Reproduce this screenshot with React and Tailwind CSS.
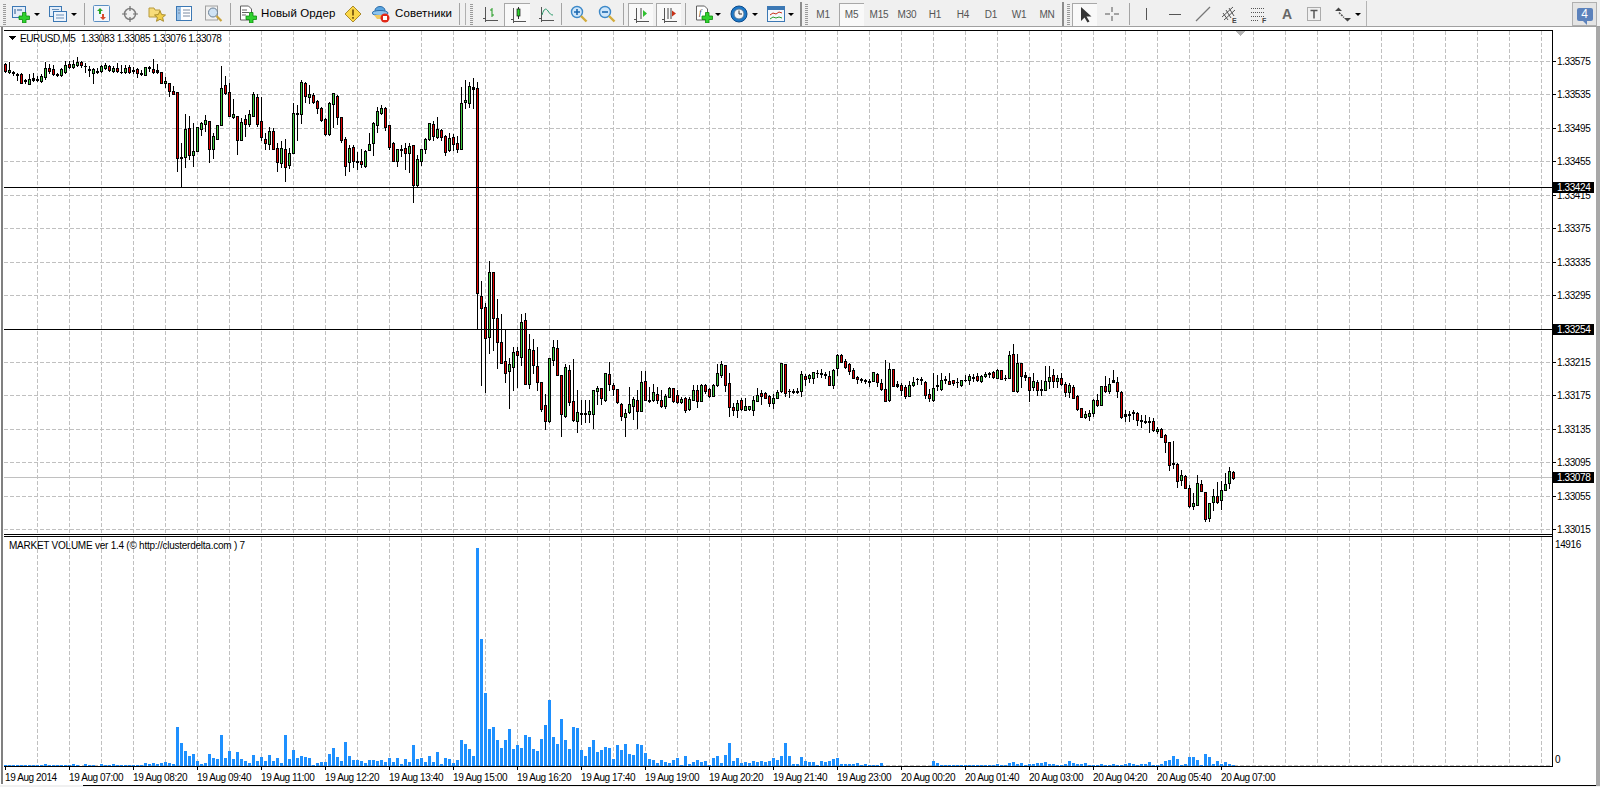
import React from "react";

const segA = "40,43,63,65,r 36,60,65,68,g 62,66,70,76,t 68,72,76,90,r 70,72,98,100,r 86,90,94,100,t 72,87,101,101,g 70,85,89,92,t 78,87,91,94,t 72,78,94,96,g 37,55,80,86,g 42,55,62,70,r 45,58,71,74,r 68,72,76,78,t 55,58,76,78,g 32,46,65,68,g 34,42,52,55,r 30,42,50,55,g 21,37,44,48,g 33,36,46,50,r 38,48,49,65,t 47,56,59,78,t 54,58,68,98,g 54,63,65,68,t 44,49,62,66,g 40,45,53,58,g 45,49,59,64,r 49,55,62,66,g 38,55,62,67,r 45,65,67,68,t 44,54,67,69,g 45,51,67,70,r 50,61,64,68,t 55,58,68,80,r 60,70,73,75,t 50,52,74,76,g 48,52,53,62,t 27,58,66,70,r 43,61,66,68,t 67,67,100,100,r 82,93,100,112,g 98,100,122,137,r 108,124,131,133,r 127,127,325,362,r 280,322,325,407,t 193,238,322,350,g 198,235,314,328,r 220,304,314,347,g 232,232,302,302,g 216,218,236,254,g 194,210,222,242,g 212,212,296,335,r 250,258,298,323,g 224,224,268,268,g 48,115,224,224,g 77,106,128,132,r 100,127,197,197,r 148,193,200,205,g 197,199,269,311,r 205,217,269,269,g 195,208,221,257,r 180,193,221,228,g 127,133,197,197,g 132,142,221,227,r 142,214,260,270,r 250,268,278,297,r 230,244,281,298,g 235,244,298,298,r 280,295,335,362,r 272,295,338,350,g 268,298,350,392,r 295,310,346,354,g 158,190,308,310,g 165,190,191,270,t 90,97,193,218,g 95,100,137,155,r 105,133,140,160,g 128,135,155,158,r 150,154,173,190,r 170,174,210,212,r 205,208,252,255,r 155,160,252,255,g 128,130,161,230,g 135,138,200,222,r 200,202,270,275,r 262,268,347,375,r 285,295,335,362,g 285,290,332,350,r 305,334,335,357,t 297,333,341,352,r 300,304,348,352,g 250,283,299,300,g 215,220,278,315,g 170,184,224,246,g 165,175,189,192,g 172,174,230,240,r 226,226,290,297,r 276,280,332,333,r 296,298,332,348,g 285,296,300,318,t 280,293,308,357,r 280,289,308,366,g 284,286,404,455,r 315,328,405,411,g 296,298,332,345,g 265,268,298,310,g 218,220,268,270,g 212,222,258,270,r 202,238,260,265,g 238,240,260,270,r 255,257,305,315,r 250,265,300,303,g 252,262,282,300,r 258,280,298,305,r 110,160,298,298,g 90,151,157,175,g 95,109,160,170,g 85,112,116,175,t 95,115,729,837,r";
const segB = "124,168,205,434,r 188,202,295,455,r 64,97,292,340,g 97,97,235,330,r 178,235,305,383,r 222,307,368,368,r 270,364,398,425,r 355,372,392,503,g 322,335,380,450,g 322,334,344,440,r 222,247,350,375,g 220,241,433,433,r 283,328,431,445,g 297,331,374,400,r 320,379,425,450,r 427,427,507,512,r 462,496,544,566,r 355,355,544,545,g 300,322,361,375,g 300,325,404,406,r 406,406,523,587,r 372,381,527,530,g 375,390,487,495,r 357,484,540,542,r 450,517,542,575,g 480,520,521,552,t 480,519,523,545,t 480,514,523,545,g 451,451,521,565,g 438,444,452,492,g 445,445,474,492,r 400,400,480,483,g 366,403,431,450,r 428,435,446,465,r 448,448,486,490,r 490,492,527,540,r 508,520,530,587,g 441,492,515,520,g 470,478,497,537,g 450,481,512,565,r 393,427,512,512,g 394,424,480,480,r 440,481,482,485,t 432,457,480,482,g 440,463,480,490,r 450,481,497,500,r 462,469,497,503,g 440,444,470,472,g 445,445,482,487,r 450,466,486,490,r 472,478,485,490,g 470,475,510,515,r 470,478,508,510,g 435,451,480,480,g 435,451,483,500,r 432,436,482,482,g 432,436,452,458,r 445,446,468,470,r 432,435,468,468,g 372,400,435,438,g 364,372,404,410,g 376,376,434,452,r 400,430,500,527,r 490,502,510,525,r 480,490,510,530,g 475,481,507,510,r 475,499,510,510,g 499,499,507,510,g 468,481,509,525,g 445,466,483,483,g 450,458,467,492,r 456,460,473,475,r 464,467,488,498,r 462,475,490,505,g 450,457,473,475,g 370,370,453,455,g 373,373,460,468,r 448,453,454,472,t 447,452,455,460,t 445,452,455,458,t 393,403,452,468,g 402,408,416,435,r 402,405,413,425,g 395,397,413,428,g 390,398,400,410,t 388,400,403,410,t 395,403,405,415,t 393,409,434,434,r 387,391,434,443,g 342,345,385,405,g";
const segC = "72,75,95,97,r 87,93,110,115,r 98,103,122,133,r 115,120,143,145,r 138,141,148,158,r 143,148,150,155,t 147,150,153,160,t 147,153,156,167,t 127,127,152,152,g 130,132,155,168,r 148,160,178,180,r 90,178,212,212,r 98,118,210,212,g 118,118,167,168,r 152,163,167,170,t 160,164,179,195,r 165,171,198,203,r 152,165,197,197,g 142,157,166,168,g 144,146,148,162,t 140,148,151,162,t 153,156,194,204,r 178,193,203,214,r 130,175,209,212,g 135,166,167,180,t 128,151,176,180,g 138,147,149,158,t 130,154,161,163,r 150,151,158,165,r 145,156,157,170,t 150,151,166,168,g 135,149,151,153,t 133,139,151,162,g 132,142,143,152,t 130,139,151,153,r 135,139,152,155,g 127,131,137,142,g 125,130,133,142,g 122,127,142,144,r 117,119,143,144,g 120,121,146,146,r 135,143,145,150,t 63,75,143,143,g 43,73,182,182,r 73,99,184,185,g 98,100,137,170,r 125,135,140,150,t 140,142,181,212,r 130,153,170,180,g 150,157,181,195,r 150,178,181,195,t 108,152,179,180,g 108,142,152,175,g 118,136,152,170,r 135,145,152,170,g 130,145,163,165,r 155,162,185,197,r 160,165,187,200,g 165,172,203,205,r 195,198,237,240,r 235,235,260,262,r 243,253,260,263,g 240,250,257,270,g 208,210,250,258,g 192,211,225,228,r 168,168,224,226,g 138,168,183,186,r 143,162,183,188,g 121,151,155,155,t 142,157,182,200,r 184,186,261,265,r 240,253,257,272,t 243,253,256,272,t 240,247,250,268,t 247,250,269,285,r 255,271,274,290,t 255,273,277,280,t 260,274,277,305,t 265,273,300,303,r 290,296,303,310,g 295,297,320,322,r 313,315,335,367,r 336,336,405,420,r 333,400,402,415,t 400,402,452,472,r 420,436,450,465,g 435,438,473,475,r 465,474,527,530,r 490,520,527,537,g 435,460,525,525,g 450,463,482,484,r 487,487,566,572,r 518,520,564,572,g 478,499,515,540,g 457,499,515,520,r 452,481,509,537,g 428,463,479,480,g 412,424,458,473,g 422,426,443,447,r";

const parseSeg = (s, off) =>
  s.split(" ").map((c) => {
    const p = c.split(",");
    return { hi: off + Math.round(+p[0] / 3), top: off + Math.round(+p[1] / 3), bot: off + Math.round(+p[2] / 3), lo: off + Math.round(+p[3] / 3), c: p[4] };
  });

const candles = [...parseSeg(segA, 50), ...parseSeg(segB, 240), ...parseSeg(segC, 330)];

const vol = [
  1,1,1,1,1,1,1,1,1,1,2,1,1,1,1,1,1,2,1,0,2,1,1,0,2,1,1,2,1,1,1,1,1,1,1,3,2,3,2,3,4,3,2,
  39,23,15,10,12,5,2,3,12,8,7,31,8,15,7,14,7,5,3,11,5,9,5,11,5,8,3,31,7,16,8,10,9,8,1,3,4,4,12,18,9,5,24,10,6,6,5,3,6,6,5,6,4,8,4,8,2,7,4,21,7,8,4,10,4,14,2,8,7,3,6,26,22,17,10,
  218,127,73,37,39,26,18,26,37,17,21,18,31,29,17,15,27,41,66,
  29,22,47,26,17,39,38,16,10,19,26,14,16,19,18,7,21,16,22,12,11,22,21,13,7,6,3,6,4,3,6,8,1,10,2,4,6,4,5,1,8,10,3,11,23,5,8,3,4,3,5,4,5,4,5,8,6,10,23,10,2,2,9,5,4,4,1,5,4,5,7,8,2,2,2,2,3,1,2,1,1,1,3,
  0,0,0,0,0,0,0,0,0,0,0,0,5,3,1,1,1,1,1,1,1,1,1,1,1,1,1,1,2,1,1,3,4,2,3,1,2,2,3,
  3,4,2,2,1,1,2,5,3,2,2,3,1,1,1,2,1,1,2,1,1,2,
  3,2,1,2,2,4,1,1,2,5,6,10,7,1,2,9,9,6,1,12,9,2,5,2,4,2,1,
];

const gridX = Array.from({ length: 48 }, (_, i) => 37 + i * 32);
const prices = [
  ["1.33575", 61], ["1.33535", 94], ["1.33495", 128], ["1.33455", 161], ["1.33415", 195],
  ["1.33375", 228], ["1.33335", 262], ["1.33295", 295], ["1.33255", 329], ["1.33215", 362],
  ["1.33175", 395], ["1.33135", 429], ["1.33095", 462], ["1.33055", 496], ["1.33015", 529],
];
const times = [
  "19 Aug 2014", "19 Aug 07:00", "19 Aug 08:20", "19 Aug 09:40", "19 Aug 11:00", "19 Aug 12:20", "19 Aug 13:40",
  "19 Aug 15:00", "19 Aug 16:20", "19 Aug 17:40", "19 Aug 19:00", "19 Aug 20:20", "19 Aug 21:40", "19 Aug 23:00",
  "20 Aug 00:20", "20 Aug 01:40", "20 Aug 03:00", "20 Aug 04:20", "20 Aug 05:40", "20 Aug 07:00",
];

const axisText = "font-['Liberation_Sans',sans-serif] text-[10px] tracking-[-0.4px]";

function PriceLabel({ y, text }) {
  return (
    <g>
      <rect x="1553" y={y - 5} width="41" height="11" fill="#000" />
      <text x="1557" y={y + 4} fill="#fff" className={axisText}>{text}</text>
    </g>
  );
}

function MainChart() {
  return (
    <svg width="1596" height="506" viewBox="0 30 1596 506" className="block" shapeRendering="crispEdges">
      {gridX.map((x) => (
        <line key={x} x1={x + 0.5} x2={x + 0.5} y1="31" y2="534" stroke="#c0c0c0" strokeDasharray="4 2" />
      ))}
      {prices.map(([t, y]) => (
        <line key={t} x1="4" x2="1552" y1={y + 0.5} y2={y + 0.5} stroke="#c0c0c0" strokeDasharray="4 2" />
      ))}
      <rect x="4" y="477" width="1548" height="1" fill="#c0c0c0" />
      {candles.map((k, i) => {
        const x = 5 + i * 4;
        return (
          <g key={i}>
            <rect x={x} y={k.hi} width="1" height={k.lo - k.hi + 1} fill="#000" />
            <rect x={x - 1} y={k.top} width="3" height={k.bot - k.top + 1} fill="#000" />
            {k.c !== "t" && k.bot - k.top > 1 && (
              <rect x={x} y={k.top + 1} width="1" height={k.bot - k.top - 1} fill={k.c === "r" ? "#e00000" : "#3ecb3e"} />
            )}
          </g>
        );
      })}
      <rect x="4" y="187" width="1548" height="1" fill="#000" />
      <rect x="4" y="329" width="1548" height="1" fill="#000" />
      <rect x="4" y="30" width="1549" height="1" fill="#000" />
      <rect x="4" y="534" width="1549" height="1" fill="#000" />
      <rect x="1552" y="30" width="1" height="506" fill="#000" />
      {prices.map(([t, y]) => (
        <g key={t}>
          <rect x="1553" y={y} width="3" height="1" fill="#000" />
          <text x="1557" y={y + 4} fill="#000" shapeRendering="auto" className={axisText}>{t}</text>
        </g>
      ))}
      <PriceLabel y={187} text="1.33424" />
      <PriceLabel y={329} text="1.33254" />
      <PriceLabel y={477} text="1.33078" />
      <path d="M1236 31h9l-4.5 5z" fill="#b4b4b4" />
      <path d="M8 36h8l-4 4z" fill="#000" />
      <text x="20" y="42" fill="#000" className={axisText}>EURUSD,M5</text>
      <text x="81" y="42" fill="#000" className={axisText}>1.33083 1.33085 1.33076 1.33078</text>
    </svg>
  );
}

function VolumeChart() {
  return (
    <svg width="1596" height="231" viewBox="0 536 1596 231" className="block" shapeRendering="crispEdges">
      {gridX.map((x) => (
        <line key={x} x1={x + 0.5} x2={x + 0.5} y1="537" y2="766" stroke="#c0c0c0" strokeDasharray="4 2" />
      ))}
      <line x1="4" x2="1552" y1="765.5" y2="765.5" stroke="#c0c0c0" strokeDasharray="4 2" />
      {vol.map((h, i) =>
        h > 0 ? <rect key={i} x={4 + i * 4} y={766 - h} width="3" height={h} fill="#1e90ff" /> : null
      )}
      <rect x="4" y="536" width="1549" height="1" fill="#000" />
      <rect x="4" y="766" width="1549" height="1" fill="#000" />
      <rect x="1552" y="536" width="1" height="231" fill="#000" />
      <text x="9" y="549" fill="#000" className="font-['Liberation_Sans',sans-serif] text-[10px] tracking-[-0.24px]">MARKET VOLUME ver 1.4 (© http://clusterdelta.com ) 7</text>
      <text x="1555" y="548" fill="#000" className={axisText}>14916</text>
      <text x="1555" y="763" fill="#000" className={axisText}>0</text>
    </svg>
  );
}

function Grip() {
  return <div className="w-[3px] h-[21px] bg-[repeating-linear-gradient(to_bottom,#9a9a9a_0,#9a9a9a_1px,transparent_1px,transparent_2px)]" />;
}
function Sep({ className }) {
  return <div className={`w-px h-[22px] bg-[#a4a4a4] ${className}`} />;
}
function Arrow({ className }) {
  return <div className={`w-0 h-0 border-x-[3px] border-x-transparent border-t-[3px] border-t-black ${className}`} />;
}
function Ico({ className = "", children }) {
  return (
    <svg width="18" height="18" viewBox="0 0 18 18" className={`shrink-0 ${className}`}>
      {children}
    </svg>
  );
}
function Box({ className, children }) {
  return (
    <div className={`h-[23px] flex items-center justify-center border-t border-l border-[#a8a8a8] bg-[#f9f9f9] ${className}`}>
      {children}
    </div>
  );
}

const Plus = () => <path d="M10.500 7.500h3.500v3.500h3.500v3.500H14V18h-3.500v-3.500H7V11h3.500z" fill="#2fd12f" stroke="#0c8a0c" strokeWidth="0.8" />;
const Axes = () => <path d="M4.5 2v13.5H17M2 13.5h2.5M4.5 17v-2" fill="none" stroke="#555" />;

function Toolbar() {
  return (
    <div className="flex items-center h-[26px] pl-[3px] pt-[2px] bg-[#f0f0f0] text-[#000] font-['Liberation_Sans',sans-serif]">
      <Grip />
      <Ico className="ml-[6px]">
        <rect x="0.5" y="1.5" width="13" height="11" fill="#e4eefa" stroke="#3c78b4" />
        <path d="M3 4v5M5 5h3M9 4v2" stroke="#2a5a90" fill="none" />
        <Plus />
      </Ico>
      <Arrow className="ml-[4px]" />
      <Ico className="ml-[9px]">
        <rect x="0.5" y="1.5" width="12" height="10" fill="#e4eefa" stroke="#3c78b4" />
        <rect x="4.5" y="6.5" width="13" height="10" fill="#eef4fc" stroke="#3c78b4" />
        <path d="M3 4.5h7M7 10h8M7 13h8" stroke="#6a8fb8" />
      </Ico>
      <Arrow className="ml-[4px]" />
      <Sep className="ml-[7px]" />
      <Ico className="ml-[8px]">
        <rect x="0.5" y="0.5" width="16" height="16" rx="1" fill="#f2f6fb" stroke="#5b8fc4" />
        <path d="M6 9V6H4l3-3 3 3H8v3z" fill="#25a525" />
        <path d="M9 9v3H7l3 3 3-3h-2V9z" fill="#d84a2a" />
      </Ico>
      <Ico className="ml-[10px]">
        <circle cx="9" cy="9" r="5.5" fill="none" stroke="#808080" strokeWidth="1.5" />
        <path d="M9 1v5M9 12v5M1 9h5M12 9h5" stroke="#707070" strokeWidth="1.2" />
      </Ico>
      <Ico className="ml-[9px]">
        <path d="M1 3h5l1 2h5v7H1z" fill="#f7dc7a" stroke="#b89a3c" />
        <path d="M12 6l1.7 3.6 3.8.4-2.9 2.5.9 3.8-3.5-2-3.5 2 .9-3.8L6.5 10l3.8-.4z" fill="#f2cf4a" stroke="#a98c2c" />
      </Ico>
      <Ico className="ml-[10px]">
        <rect x="0.5" y="1.5" width="15" height="14" fill="#fff" stroke="#3c78b4" />
        <rect x="1" y="2" width="4" height="13" fill="#9cc3e8" />
        <path d="M7 5h7M7 8h7M7 11h7M2 5h2M2 8h2" stroke="#7a8aa0" />
      </Ico>
      <Ico className="ml-[11px]">
        <rect x="0.5" y="1" width="12" height="14" fill="#f0f0f0" stroke="#a0a0a0" />
        <circle cx="8" cy="7.5" r="4.5" fill="#cfe2f4" stroke="#6a7f94" />
        <path d="M11.5 11l5 5" stroke="#c8a23a" strokeWidth="2.2" />
      </Ico>
      <Sep className="ml-[7px]" />
      <Ico className="ml-[8px]">
        <path d="M1.5 1h8l3 3v11h-11z" fill="#fff" stroke="#606060" />
        <path d="M3 5h5M3 7.500h7M3 10h4" stroke="#606060" />
        <Plus />
      </Ico>
      <span className="ml-[4px] w-[73px] text-[11.5px] tracking-[0.1px] whitespace-nowrap">Новый Ордер</span>
      <Ico className="ml-[10px]">
        <path d="M9 1l8 8-8 8-8-8z" fill="#fbd748" stroke="#a98a2a" />
        <path d="M9 4.500v6M9 12v1.800" stroke="#7a5a10" strokeWidth="1.8" />
      </Ico>
      <Ico className="ml-[10px]">
        <ellipse cx="8" cy="5.500" rx="5" ry="4" fill="#5aa5e0" stroke="#2c6ca8" />
        <ellipse cx="8" cy="8" rx="8" ry="2.500" fill="#8cc4ee" stroke="#2c6ca8" />
        <path d="M2 10h8v4H5z" fill="#f0c860" />
        <circle cx="13" cy="13" r="4.500" fill="#e02818" />
        <rect x="11" y="11" width="4" height="4" fill="#fff" />
      </Ico>
      <span className="ml-[5px] w-[58px] text-[11.5px] tracking-[0.1px] whitespace-nowrap">Советники</span>
      <Sep className="ml-[6px]" />
      <div className="ml-[5px] w-px h-[22px] bg-[#b0b0b0]" />
      <div className="ml-[4px]"><Grip /></div>
      <Ico className="ml-[8px]">
        <Axes />
        <path d="M11 3v9M9 5h2M11 10h2" stroke="#1f9a1f" fill="none" />
      </Ico>
      <Box className="ml-[5px] w-[26px]">
        <Ico>
          <Axes />
          <path d="M9.500 1v12" stroke="#333" />
          <rect x="8" y="3" width="3" height="7" fill="#2fd12f" stroke="#111" strokeWidth="0.7" />
        </Ico>
      </Box>
      <Ico className="ml-[7px]">
        <Axes />
        <path d="M5 10c2-7 4-7 6-4s3 4 5 4" fill="none" stroke="#2a9a6a" />
      </Ico>
      <Sep className="ml-[6px]" />
      <Ico className="ml-[8px]">
        <circle cx="7" cy="7" r="5.500" fill="#cfe6fa" stroke="#3c88c8" strokeWidth="1.400" />
        <path d="M4 7h6M7 4v6" stroke="#1c68b0" strokeWidth="1.600" />
        <path d="M11 11l5.500 5.500" stroke="#d2ac3c" strokeWidth="2.400" />
      </Ico>
      <Ico className="ml-[10px]">
        <circle cx="7" cy="7" r="5.500" fill="#cfe6fa" stroke="#3c88c8" strokeWidth="1.400" />
        <path d="M4 7h6" stroke="#1c68b0" strokeWidth="1.600" />
        <path d="M11 11l5.500 5.500" stroke="#d2ac3c" strokeWidth="2.400" />
      </Ico>
      <Sep className="ml-[7px]" />
      <Box className="ml-[4px] w-[25px]">
        <Ico>
          <Axes />
          <path d="M9 2v11" stroke="#444" />
          <path d="M11 4l4 3.500-4 3.500z" fill="#2fc12f" />
        </Ico>
      </Box>
      <Box className="ml-[3px] w-[25px]">
        <Ico>
          <Axes />
          <path d="M8 2v11M11 2v11" stroke="#444" />
          <path d="M16 7.500l-4-3v6z" fill="#c83218" />
        </Ico>
      </Box>
      <Sep className="ml-[4px]" />
      <Ico className="ml-[9px]">
        <path d="M1.500 1h8l3 3v11h-11z" fill="#fff" stroke="#606060" />
        <text x="4" y="10" fontSize="9" fontStyle="italic" fontFamily="Liberation Serif" fill="#333">f</text>
        <Plus />
      </Ico>
      <Arrow className="ml-[2px]" />
      <Ico className="ml-[9px]">
        <circle cx="9" cy="9" r="8" fill="#1c78c8" stroke="#0c4a8a" />
        <circle cx="9" cy="9" r="5" fill="#f2f4f6" stroke="#5a7a9a" />
        <path d="M9 5.500V9h3" stroke="#333" fill="none" />
      </Ico>
      <Arrow className="ml-[4px]" />
      <Ico className="ml-[9px]">
        <rect x="0.500" y="1.500" width="17" height="15" fill="#f4f8fc" stroke="#3c78b4" />
        <rect x="1" y="2" width="16" height="3" fill="#3c78b4" />
        <path d="M3 10l3-2 3 1 3-2 3 1" fill="none" stroke="#c83218" />
        <path d="M3 14l3-2 3 1 3-1 3 1" fill="none" stroke="#2a9a2a" />
      </Ico>
      <Arrow className="ml-[3px]" />
      <div className="ml-[6px] w-[2px] h-[24px] bg-[#8c8c8c]" />
      <div className="ml-[3px]"><Grip /></div>
      <div className="ml-px flex text-[10px] tracking-[-0.2px] text-[#555]">
        {["M1", "M5", "M15", "M30", "H1", "H4", "D1", "W1", "MN"].map((t) => (
          <div key={t} className="w-[28px] flex justify-center">
            <span className={t === "M5" ? "w-[25px] h-[23px] flex items-center justify-center border-t border-l border-[#a8a8a8] bg-[#f9f9f9]" : "h-[23px] flex items-center"}>{t}</span>
          </div>
        ))}
      </div>
      <div className="ml-px w-[2px] h-[24px] bg-[#8c8c8c]" />
      <div className="ml-[3px]"><Grip /></div>
      <Box className="ml-[2px] w-[25px]">
        <Ico>
          <path d="M5 1v14l3.500-3.500 3 5 2-1-3-5h5z" fill="#333" />
        </Ico>
      </Box>
      <Ico className="ml-[6px]">
        <path d="M9 2v5M9 11v5M2 9h5M11 9h5" stroke="#555" />
      </Ico>
      <Sep className="ml-[8px]" />
      <Ico className="ml-[7px]"><path d="M9.500 3v12" stroke="#555" /></Ico>
      <Ico className="ml-[11px]"><path d="M3 9.500h12" stroke="#555" /></Ico>
      <Ico className="ml-[10px]"><path d="M2 16L16 2" stroke="#777" strokeWidth="1.200" /></Ico>
      <Ico className="ml-[9px]">
        <path d="M1 12L12 2M3 15L14 5M2 8l5 7M5 5l5 8M8 3l5 8" stroke="#555" fill="none" />
        <text x="11" y="17.500" fontSize="7" fontWeight="bold" fill="#444" fontFamily="Liberation Sans">E</text>
      </Ico>
      <Ico className="ml-[11px]">
        <path d="M1 3.500h13M1 7.500h13M1 11.500h13M1 15.500h8" stroke="#555" strokeDasharray="1 1" />
        <text x="12" y="17.500" fontSize="7" fontWeight="bold" fill="#444" fontFamily="Liberation Sans">F</text>
      </Ico>
      <span className="ml-[10px] w-[18px] text-center text-[14px] font-bold text-[#666]">A</span>
      <Ico className="ml-[9px]">
        <rect x="2.500" y="2.500" width="13" height="13" fill="none" stroke="#666" strokeDasharray="1 1" />
        <path d="M5.500 5.500h7M9 5.500v8" stroke="#555" strokeWidth="1.500" />
      </Ico>
      <Ico className="ml-[11px]">
        <path d="M1 6l3.500-3.500L8 6zM10 13l3.500 3.500L17 13z" fill="#444" />
        <path d="M5 7.500l5 5" stroke="#555" strokeWidth="1.500" strokeDasharray="2 1" />
      </Ico>
      <Arrow className="ml-[3px]" />
      <div className="ml-[5px] w-px h-[26px] bg-[#b4b4b4]" />
      <div className="flex-1" />
      <div className="mr-[3px] w-[25px] h-[24px] flex items-center justify-center border border-[#b0b0b0] bg-[#e4e4e4]">
        <div className="relative w-[16px] h-[13px] rounded-[2px] bg-[#5c82bc] flex items-center justify-center text-white text-[12px] leading-none">
          4
          <div className="absolute left-[6px] top-[13px] w-0 h-0 border-l-[4px] border-l-transparent border-t-[4px] border-t-[#5c82bc]" />
        </div>
      </div>
    </div>
  );
}

function TimeAxis() {
  return (
    <div className={`flex h-[18px] pl-[5px] ${axisText}`}>
      {times.map((t) => (
        <div key={t} className="w-[64px] shrink-0">
          <div className="w-px h-[3px] bg-black" />
          <div className="whitespace-nowrap leading-[12px] mt-[2px]">{t}</div>
        </div>
      ))}
    </div>
  );
}

export default function App() {
  return (
    <div className="w-[1600px] h-[787px] overflow-hidden flex flex-col bg-white text-black">
      <Toolbar />
      <div className="h-px bg-[#a0a0a0]" />
      <div className="flex flex-1 min-h-0">
        <div className="relative w-[1596px] pt-[3px]">
          <div className="absolute left-px top-0 bottom-[2px] w-[2px] bg-[#808080]" />
          <MainChart />
          <VolumeChart />
          <TimeAxis />
          <div className="flex h-[1px]">
            <div className="w-[83px] bg-[#f0f0f0]" />
            <div className="flex-1 bg-black" />
          </div>
        </div>
        <div className="w-[4px] bg-[#a8a8a8]" />
      </div>
      <div className="h-px bg-[#f0f0f0]" />
    </div>
  );
}
